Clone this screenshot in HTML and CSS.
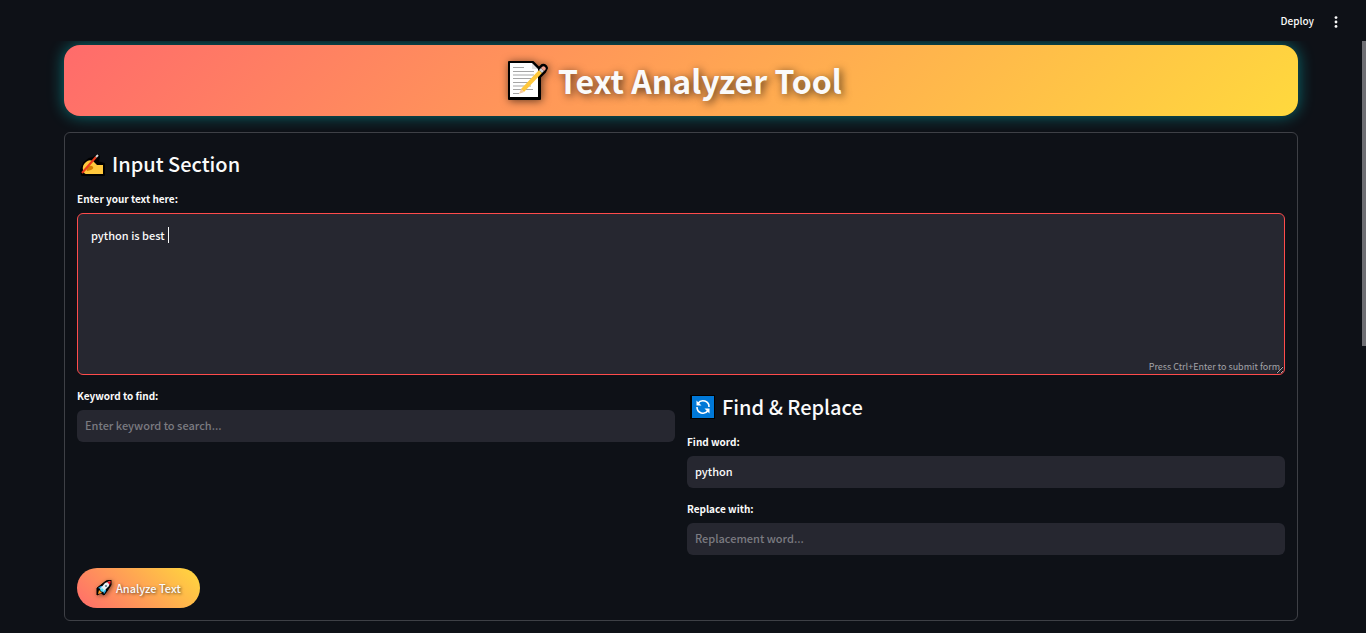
FILE: index.html
```html
<!DOCTYPE html>
<html lang="en">
<head>
<meta charset="utf-8">
<title>Text Analyzer Tool</title>
<link rel="stylesheet" href="styles.css">
</head>
<body>
<header class="toolbar">
  <button class="deploy" type="button">Deploy</button>
  <button class="menu" type="button" aria-label="Main menu">
    <svg width="4" height="12" viewBox="0 0 4 12" fill="#fafafa"><circle cx="2" cy="1.6" r="1.4"/><circle cx="2" cy="6" r="1.4"/><circle cx="2" cy="10.4" r="1.4"/></svg>
  </button>
</header>
<main class="page">
  <div class="scroll-thumb"></div>
  <h1 class="banner">
    <svg class="banner-icon" width="42" height="42" viewBox="0 0 42 42" aria-hidden="true">
      <path d="M3 3H27L33 9L36 6Q40 5 41 9L39 13L34 18V40H3Z" fill="#000" stroke="#000" stroke-width="2" stroke-linejoin="round"/>
      <path d="M4 4H26V10H32V38H4Z" fill="#fff"/>
      <path d="M26 4L32 10H26Z" fill="#e4e4e4"/>
      <path d="M7 8.5H18M7 12.5H28M7 16H28M7 19.5H26M7 23.500H26M7 27H25M7 30.500H27M7 34.500H13" stroke="#a5a5a5" stroke-width="1"/>
      <path d="M15 30L33 11L36 14L18 33Z" fill="#ffc83d"/>
      <path d="M15 30L18 33L13 35Z" fill="#f6c9a0"/>
      <path d="M33 11L35 9L38 12L36 14Z" fill="#cfd3d6"/>
      <path d="M35 9Q37 6 39 8Q41 10 38 12Z" fill="#f2a08e"/>
    </svg>
    <span>Text Analyzer Tool</span>
  </h1>
  <form class="card">
    <section>
      <h2 class="heading">
        <svg class="heading-icon" width="28" height="24" viewBox="0 0 28 24" aria-hidden="true">
          <path d="M4 18L7 11L12 7L16 6L20 3L22 4L21 10L27 12V23H5Z" fill="#000" stroke="#000" stroke-width="2" stroke-linejoin="round"/>
          <path d="M6 18Q5 13 9 10Q12 7 16 9L20 13H26V22H9Q7 22 6 18Z" fill="#ffc83d"/>
          <path d="M9 16Q12 13 15 14Q18 16 14 18L10 19Z" fill="#d67d00"/>
          <path d="M5 21L19 5" stroke="#e93b1c" stroke-width="2"/>
          <path d="M19 5L21 3" stroke="#d8d8d8" stroke-width="2"/>
        </svg>
        <span>Input Section</span>
      </h2>
      <label class="label" for="text">Enter your text here:</label>
      <div class="text-wrap">
        <textarea class="text" id="text" spellcheck="false">python is best </textarea>
        <span class="caret"></span>
        <span class="hint">Press Ctrl+Enter to submit form</span>
      </div>
    </section>
    <div class="columns">
      <section>
        <label class="label" for="keyword">Keyword to find:</label>
        <input class="field" id="keyword" type="text" placeholder="Enter keyword to search...">
      </section>
      <section>
        <h2 class="heading">
          <svg class="heading-icon" width="28" height="24" viewBox="0 0 28 24" aria-hidden="true">
            <path d="M3 0H28V24H3Z" fill="#000"/>
            <path d="M5 1H27V23H5Z" fill="#0078d7"/>
            <path d="M11 8.500A6 6 0 0 1 22 12M10 12A6 6 0 0 0 21 15.500" fill="none" stroke="#fff" stroke-width="1.600"/>
            <path d="M9.500 5.500V10.500H14.500ZM22.500 18.500V13.500H17.500Z" fill="#fff"/>
          </svg>
          <span>Find &amp; Replace</span>
        </h2>
        <label class="label" for="find">Find word:</label>
        <input class="field" id="find" type="text" value="python">
        <label class="label label-next" for="replace">Replace with:</label>
        <input class="field" id="replace" type="text" placeholder="Replacement word...">
      </section>
    </div>
    <button class="submit" type="button">
      <svg class="submit-icon" width="16" height="16" viewBox="0 0 16 16" aria-hidden="true">
        <path d="M1 8L5 5L10 1L15 0V5L11 11L8 15L5 13L1 15Z" fill="#000" stroke="#000" stroke-linejoin="round"/>
        <path d="M2 8L5 6H7L5 9ZM8 14L10 11V9L7 11Z" fill="#28a8ea"/>
        <path d="M4 9L9 3L14 1L13 6L7 12Z" fill="#e9eef2"/>
        <path d="M11 2L15 1L14 5Z" fill="#e81224"/>
        <path d="M4 10L6 12L8 10L6 8Z" fill="#50e0f5"/>
        <path d="M2 14L3 10L6 13Z" fill="#ff9b22"/>
        <circle cx="10" cy="6" r="1" fill="#54717d"/>
      </svg>
      <span>Analyze Text</span>
    </button>
  </form>
</main>
</body>
</html>
```
FILE: styles.css
```css
* { box-sizing: border-box; }

body {
  margin: 0;
  height: 100vh;
  display: flex;
  flex-direction: column;
  overflow: hidden;
  background: #0e1117;
  color: #fafafa;
  color-scheme: dark;
  font-family: "Noto Sans CJK SC", "Source Sans Pro", sans-serif;
  font-size: 11px;
  font-weight: 500;
}

button, input, textarea { font: inherit; color: inherit; }

.toolbar {
  flex: none;
  height: 41px;
  padding: 2px 28px 0 0;
  display: flex;
  align-items: center;
  justify-content: flex-end;
  gap: 20px;
}

.deploy, .menu {
  padding: 0;
  border: 0;
  background: none;
}

.deploy {
  padding-bottom: 2px;
  font-size: 10px;
}

.menu { display: flex; }

.page {
  position: relative;
  flex: 1;
  min-height: 0;
  overflow: hidden;
  padding: 4px 68px 0 64px;
}

.scroll-thumb {
  position: absolute;
  top: 0;
  right: 0;
  width: 4px;
  height: 305px;
  background: #6e6e73;
}

.banner {
  margin: 0 0 16px;
  height: 71px;
  padding: 0 14px 2px 0;
  display: flex;
  align-items: center;
  justify-content: center;
  gap: 10px;
  border-radius: 16px;
  background: linear-gradient(135deg, #ff6b6b, #ffd93d);
  box-shadow: 0 0 16px rgba(0, 255, 255, 0.4);
  font-size: 32px;
  font-weight: 700;
  line-height: 48px;
  text-shadow: 2px 2px 8px rgba(0, 0, 0, 0.7);
}

.banner-icon { filter: drop-shadow(1px 1px 4px rgba(0, 0, 0, 0.6)); }

.card {
  padding: 12px;
  border: 1px solid #3e4046;
  border-radius: 6px;
}

.heading {
  margin: 0 0 6px;
  height: 40px;
  padding-bottom: 2px;
  display: flex;
  align-items: center;
  gap: 7px;
  font-size: 20px;
  font-weight: 500;
  line-height: 30px;
}

.label {
  display: block;
  height: 16px;
  margin-bottom: 6px;
  font-size: 10px;
  font-weight: 700;
  line-height: 16px;
}

.label-next { margin-top: 13px; }

.text-wrap { position: relative; }

.text {
  display: block;
  width: 100%;
  height: 162px;
  padding: 13px;
  border: 1px solid #ff4b4b;
  border-radius: 6px;
  outline: 0;
  background: #262730;
  line-height: 16px;
  resize: vertical;
}

.caret {
  position: absolute;
  top: 14px;
  left: 91px;
  width: 1px;
  height: 16px;
  background: #fafafa;
}

.hint {
  position: absolute;
  right: 5px;
  bottom: 2px;
  color: #a3a3a8;
  font-size: 9px;
  font-weight: 400;
  line-height: 12px;
}

.columns {
  display: grid;
  grid-template-columns: 1fr 1fr;
  gap: 12px;
  margin: 13px 0;
}

.field {
  display: block;
  width: 100%;
  height: 32px;
  padding: 0 8px 2px;
  border: 0;
  border-radius: 6px;
  outline: 0;
  background: #262730;
}

.field::placeholder { color: #7b7b81; opacity: 1; }

.submit {
  height: 40px;
  padding: 0 19px;
  display: flex;
  align-items: center;
  gap: 4px;
  border: 0;
  border-radius: 20px;
  background: linear-gradient(45deg, #ff6b6b, #ffd93d);
  text-shadow: 1px 1px 3px rgba(0, 0, 0, 0.6);
}

.submit-icon { filter: drop-shadow(1px 1px 2px rgba(0, 0, 0, 0.5)); }
```
